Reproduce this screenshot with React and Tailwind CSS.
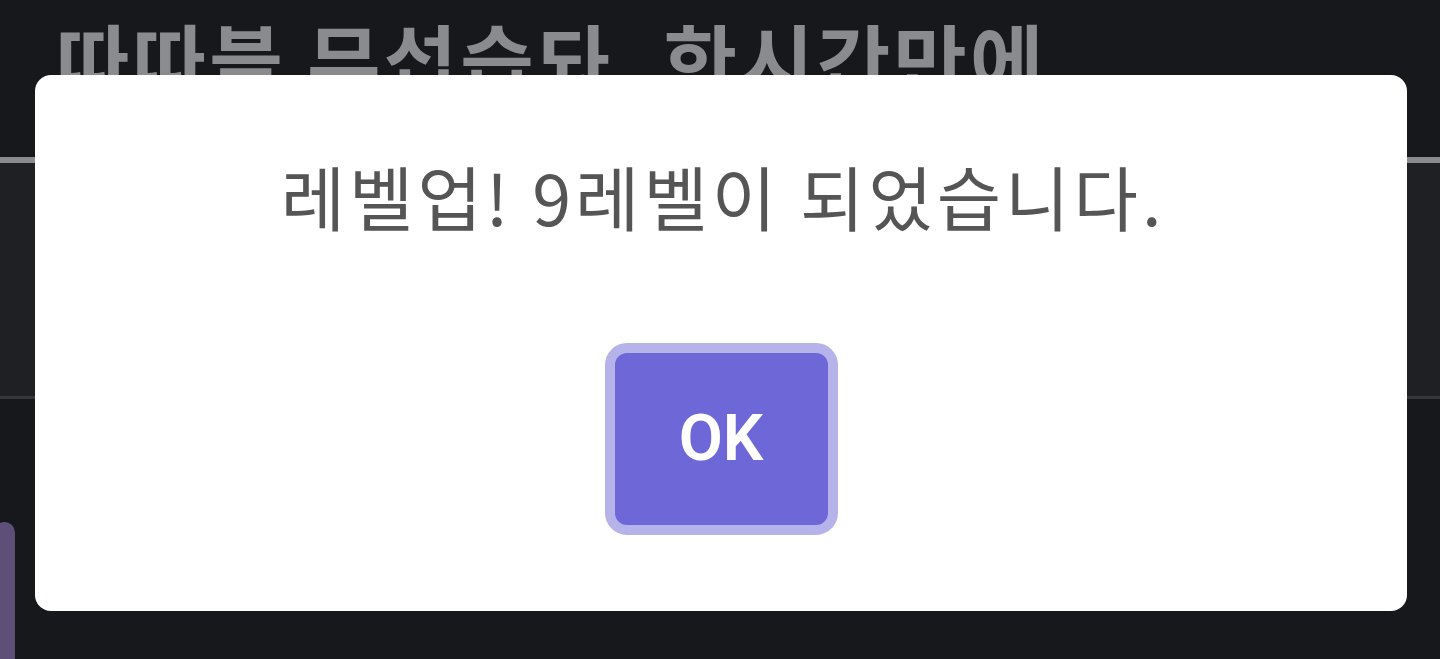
const KR = { fontFamily: '"Noto Sans CJK KR", "Noto Sans", sans-serif' }

function LevelUpDialog({ level, onClose }) {
  return (
    <div className="absolute left-[35px] top-[75px] flex h-[536px] w-[1372px] flex-col items-center rounded-[16px] bg-white">
      <p className="mt-[86px] pl-[4px] text-[70px] leading-none tracking-[4px] text-[#555555]" style={KR}>
        레벨업! {level}레벨이 되었습니다.
      </p>
      <button
        type="button"
        onClick={onClose}
        className="mt-[112px] flex h-[192px] w-[233px] items-center justify-center rounded-[22px] border-[10px] border-[#b6b2ea] bg-[#6e67d8] text-[64px] font-semibold text-white"
        style={{ fontFamily: 'Roboto, "Noto Sans", sans-serif' }}
      >
        OK
      </button>
    </div>
  )
}

export default function App() {
  return (
    <div className="relative h-[659px] w-full overflow-hidden bg-[#17181c]">
      <div className="h-[157px] pl-[56px] pt-[17px]">
        <h1 className="whitespace-nowrap text-[80px] font-bold leading-none tracking-[3px] text-[#8a8b8f]" style={KR}>
          따따블 무섭습돠, 한시간만에
        </h1>
      </div>
      <div className="h-[6px] bg-[#8a8b8f]" />
      <div className="h-[233px] bg-[#1f2024]" />
      <div className="h-[3px] bg-[#36373b]" />
      <div className="flex pt-[123px]">
        <div className="ml-[-6px] h-[200px] w-[21px] rounded-t-full bg-[#5d4f78]" />
      </div>

      <LevelUpDialog level={9} onClose={() => {}} />
    </div>
  )
}
